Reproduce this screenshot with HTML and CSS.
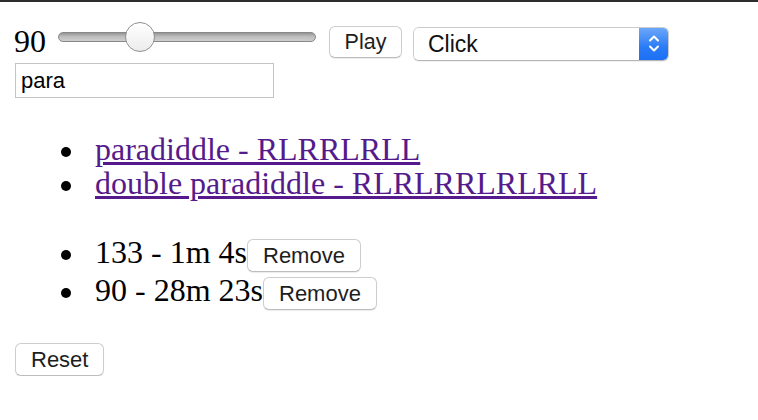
FILE: index.html
```html
<!DOCTYPE html>
<html>
<head>
<meta charset="utf-8">
<link rel="stylesheet" href="styles.css">
</head>
<body>
<div class="topbar"></div>
<main class="page">
  <div class="controls">
    <span class="bpm">90</span>
    <input type="range" class="tempo" min="20" max="260" value="90">
    <button class="btn play">Play</button>
    <div class="select-wrap">
      <select class="sound"><option>Click</option><option>Beep</option></select>
      <span class="select-arrow">
        <svg width="12" height="20" viewBox="0 0 12 20"><path d="M2 6.5 L6 2.5 L10 6.5" fill="none" stroke="#fff" stroke-width="2" stroke-linecap="round" stroke-linejoin="round"/><path d="M2 12.5 L6 16.5 L10 12.5" fill="none" stroke="#fff" stroke-width="2" stroke-linecap="round" stroke-linejoin="round"/></svg>
      </span>
    </div>
  </div>
  <input class="search" type="text" value="para">
  <ul class="list rudiments">
    <li class="item"><a class="link" href="#paradiddle">paradiddle - RLRRLRLL</a></li>
    <li class="item"><a class="link" href="#double-paradiddle">double paradiddle - RLRLRRLRLRLL</a></li>
  </ul>
  <ul class="list history">
    <li class="item">133 - 1m 4s<button class="btn remove">Remove</button></li>
    <li class="item">90 - 28m 23s<button class="btn remove">Remove</button></li>
  </ul>
  <button class="btn reset">Reset</button>
</main>
</body>
</html>
```

FILE: styles.css
```css
html, body {
  margin: 0;
  padding: 0;
  background: #ffffff;
}

body {
  font-family: "Liberation Serif", "Times New Roman", serif;
  font-size: 32px;
  line-height: 34px;
  color: #000;
}

.topbar {
  height: 2px;
  background: #2c2c2c;
}

.page {
  padding: 0 0 0 15px;
}

.controls {
  display: flex;
  align-items: flex-start;
  padding-top: 20px;
}

.bpm {
  display: block;
  margin-top: 2px;
  margin-left: -1px;
  width: 32px;
}

.tempo {
  -webkit-appearance: none;
  appearance: none;
  margin: 0 0 0 12px;
  width: 258px;
  height: 30px;
  background: transparent;
  padding: 0;
}

.tempo::-webkit-slider-runnable-track {
  height: 10px;
  border-radius: 5px;
  border: 1px solid #888888;
  background: linear-gradient(#959595, #bdbdbd 45%, #cecece);
  box-sizing: border-box;
}

.tempo::-webkit-slider-thumb {
  -webkit-appearance: none;
  appearance: none;
  width: 30px;
  height: 30px;
  margin-top: -11px;
  border-radius: 50%;
  border: 1.5px solid #8f8f8f;
  background: linear-gradient(#ffffff, #ececec);
  box-sizing: border-box;
}

.btn {
  font-family: "Liberation Sans", Arial, sans-serif;
  font-size: 22px;
  line-height: 25px;
  color: #1e1e1e;
  background: #ffffff;
  border: 1px solid #cdcdcd;
  border-bottom-color: #bdbdbd;
  border-radius: 6px;
  box-shadow: 0 1px 1px rgba(0, 0, 0, 0.08);
  padding: 3px 15px;
  height: 33px;
  box-sizing: border-box;
}

.play {
  margin: 4px 0 0 13px;
  width: 73px;
  height: 32px;
  font-size: 21.5px;
  padding: 2px 0;
}

.select-wrap {
  display: flex;
  margin: 5px 0 0 11px;
  width: 256px;
  height: 34px;
  box-sizing: border-box;
  border: 1px solid #cbcbcb;
  border-bottom-color: #b5b5b5;
  border-radius: 6px;
  overflow: hidden;
  box-shadow: 0 1px 1px rgba(0, 0, 0, 0.06);
}

.sound {
  -webkit-appearance: none;
  appearance: none;
  flex: 1;
  border: none;
  margin: 0;
  padding: 0 0 0 14px;
  background: #fff;
  font-family: "Liberation Sans", Arial, sans-serif;
  font-size: 23px;
  color: #111;
  outline: none;
}

.select-arrow {
  width: 29px;
  display: flex;
  align-items: center;
  justify-content: center;
  background: linear-gradient(#6ca7f9, #2a7bf6 60%, #1c70f5);
}

.search {
  display: block;
  margin: 2px 0 0 0;
  width: 259px;
  height: 35px;
  box-sizing: border-box;
  border: 1px solid #c4c4c4;
  padding: 0 5px;
  font-family: "Liberation Sans", Arial, sans-serif;
  font-size: 22px;
  color: #000;
  outline: none;
}

.list {
  margin: 0;
  padding-left: 80px;
  list-style: none;
}

.item::before {
  content: "";
  display: inline-block;
  width: 10px;
  height: 10px;
  border-radius: 50%;
  background: #000;
  margin-left: -34px;
  margin-right: 24px;
  vertical-align: 3px;
}

.rudiments {
  margin-top: 34px;
}

.link {
  color: #551a8b;
}

.history {
  margin-top: 35px;
}

.remove {
  margin: 0 0 1px 0;
}

.reset {
  display: block;
  margin-top: 32px;
}
```
